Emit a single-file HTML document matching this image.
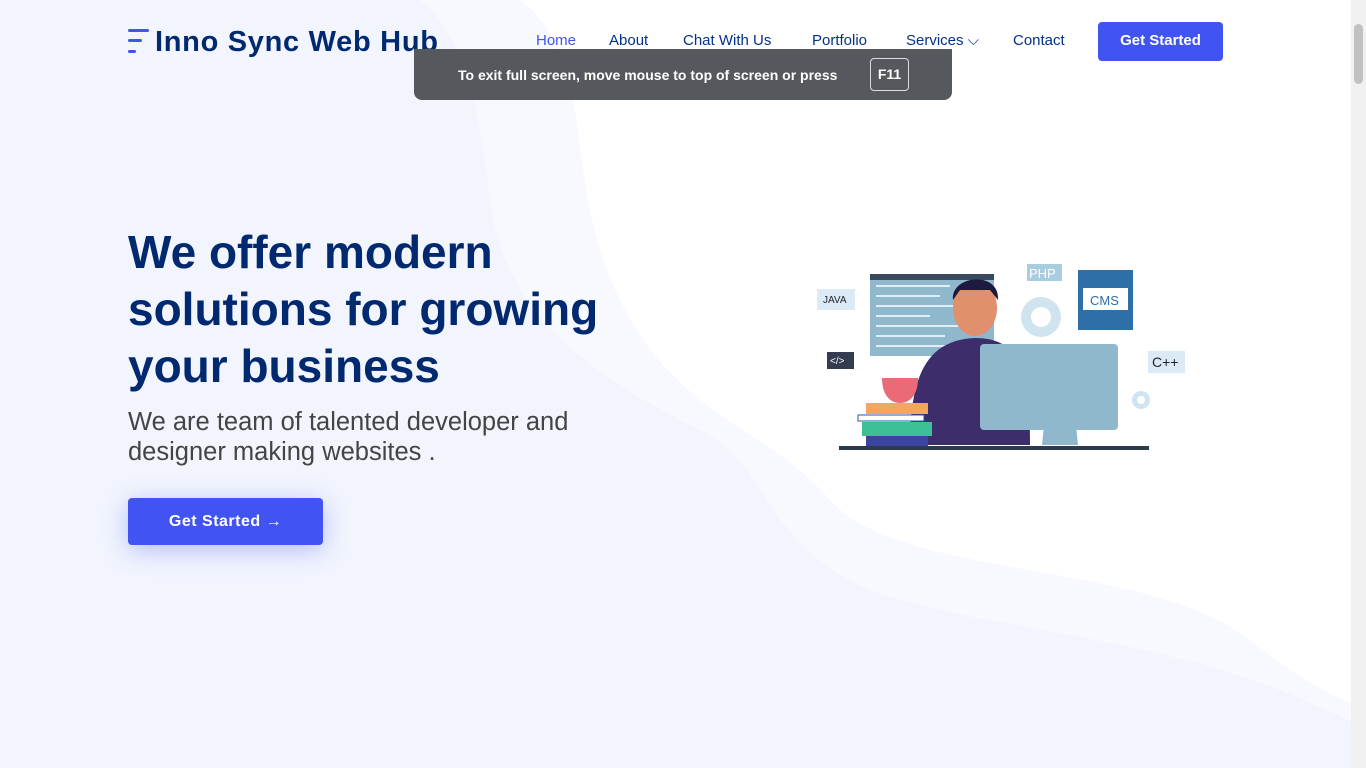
<!DOCTYPE html>
<html><head><meta charset="utf-8"><style>
*{margin:0;padding:0;box-sizing:border-box}
body{width:1366px;height:768px;overflow:hidden;background:#fff;font-family:"Liberation Sans",sans-serif;position:relative}
.bg{position:absolute;left:0;top:0}
.logo{position:absolute;left:128px;top:26px;font-size:29px;font-weight:bold;color:#012970;letter-spacing:0.7px}
.logo i{position:absolute;left:0;height:3px;background:#4154f1;border-radius:2px}
nav{position:absolute;top:32px;left:536px;font-size:15px;color:#013289}
nav span{position:absolute;white-space:nowrap}
.btn{position:absolute;left:1098px;top:22px;width:125px;height:39px;background:#4154f1;color:#fff;border-radius:4px;font-size:15px;font-weight:bold;text-align:center;line-height:37px}
.toast{position:absolute;left:414px;top:49px;width:538px;height:51px;background:#55585c;border-radius:0 0 8px 8px;color:#fff;font-size:14px;font-weight:bold}
.toast span{position:absolute;left:44px;top:18px}
.toast b{position:absolute;left:456px;top:9px;width:39px;height:33px;border:1px solid #ddd;border-radius:4px;text-align:center;line-height:31px}
h1{position:absolute;left:128px;top:224px;font-size:46px;line-height:57px;color:#012970;font-weight:bold;width:520px}
.sub{position:absolute;left:128px;top:407px;font-size:25.5px;line-height:30px;color:#444}
.cta{position:absolute;left:128px;top:498px;width:195px;height:47px;background:#4154f1;color:#fff;border-radius:4px;font-size:16px;font-weight:bold;text-align:center;line-height:47px;letter-spacing:.5px;box-shadow:0 5px 25px rgba(65,84,241,.35)}
.sb{position:absolute;right:0;top:0;width:15px;height:768px;background:#f1f1f1}
.sb div{position:absolute;left:3px;top:24px;width:9px;height:60px;background:#c1c1c1;border-radius:5px}
</style></head><body>
<svg class="bg" width="1366" height="768">
<rect width="1366" height="768" fill="#fff"/>
<path d="M0 0 H520 C600 60 560 180 620 300 C680 420 760 420 830 500 C900 580 1150 560 1250 640 C1300 680 1340 700 1366 710 V768 H0Z" fill="#f8f9fe"/>
<path d="M0 0 H420 C470 40 480 120 490 200 C505 320 600 380 700 430 C780 470 760 560 900 600 C1050 640 1200 640 1366 730 V768 H0Z" fill="#f2f5fd"/>
</svg>
<div class="logo"><i style="top:3px;width:21px"></i><i style="top:13px;width:14px"></i><i style="top:24px;width:8px"></i><span style="margin-left:27px">Inno Sync Web Hub</span></div>
<nav><span style="left:0;color:#4154f1">Home</span><span style="left:73px">About</span><span style="left:147px">Chat With Us</span><span style="left:276px">Portfolio</span><span style="left:370px">Services ⌵</span><span style="left:477px">Contact</span></nav>
<div class="btn">Get Started</div>
<h1>We offer modern solutions for growing your business</h1>
<div class="sub">We are team of talented developer and<br>designer making websites .</div>
<div class="cta">Get Started →</div>
<svg style="position:absolute;left:810px;top:260px" width="390" height="200" font-family="Liberation Sans">
<rect x="7" y="29" width="38" height="21" fill="#dbeaf5"/><text x="13" y="43" font-size="10" fill="#223">JAVA</text>
<rect x="17" y="92" width="27" height="17" fill="#333d4f"/><text x="20" y="104" font-size="10" fill="#fff">&lt;/&gt;</text>
<rect x="60" y="14" width="124" height="82" fill="#8fb8cc"/><rect x="60" y="14" width="124" height="6" fill="#3a4a5e"/>
<g stroke="#dfeef5" stroke-width="2"><line x1="66" y1="26" x2="140" y2="26"/><line x1="66" y1="36" x2="130" y2="36"/><line x1="66" y1="46" x2="145" y2="46"/><line x1="66" y1="56" x2="120" y2="56"/><line x1="66" y1="66" x2="150" y2="66"/><line x1="66" y1="76" x2="135" y2="76"/><line x1="66" y1="86" x2="140" y2="86"/></g>
<rect x="217" y="4" width="35" height="17" fill="#a8cde0"/><text x="219" y="18" font-size="13" fill="#fff">PHP</text>
<rect x="268" y="10" width="55" height="60" fill="#2e6fa8"/><rect x="273" y="28" width="45" height="22" fill="#fff"/><text x="280" y="45" font-size="13" fill="#2e6fa8">CMS</text>
<circle cx="231" cy="57" r="20" fill="#cfe4ee"/><circle cx="231" cy="57" r="10" fill="#fff"/>
<rect x="338" y="91" width="37" height="22" fill="#dbeaf5"/><text x="342" y="107" font-size="14" fill="#223">C++</text>
<circle cx="331" cy="140" r="9" fill="#cfe4ee"/><circle cx="331" cy="140" r="4" fill="#fff"/>
<path d="M100 185 C100 110 120 80 165 78 C210 78 220 110 220 185Z" fill="#3d2e6b"/>
<ellipse cx="165" cy="48" rx="22" ry="28" fill="#e0906c"/>
<path d="M143 40 C140 15 190 10 188 40 L180 30 L150 30Z" fill="#1c1a3e"/>
<rect x="170" y="84" width="138" height="86" rx="4" fill="#8fb8cc"/>
<path d="M235 155 H265 L268 185 H232Z" fill="#8fb8cc"/>
<path d="M72 118 H108 C108 135 100 143 90 143 C80 143 72 135 72 118Z" fill="#ea6a77"/>
<rect x="56" y="143" width="62" height="11" fill="#f2a955"/>
<rect x="48" y="155" width="66" height="6" fill="#fff" stroke="#3b4ca8"/>
<rect x="52" y="162" width="70" height="14" fill="#3dbf98"/>
<rect x="56" y="176" width="62" height="10" fill="#3b44a0"/>
<rect x="29" y="186" width="310" height="4" fill="#2e3b4e"/>
</svg>
<div class="toast"><span>To exit full screen, move mouse to top of screen or press</span><b>F11</b></div>
<div class="sb"><div></div></div>
</body></html>
